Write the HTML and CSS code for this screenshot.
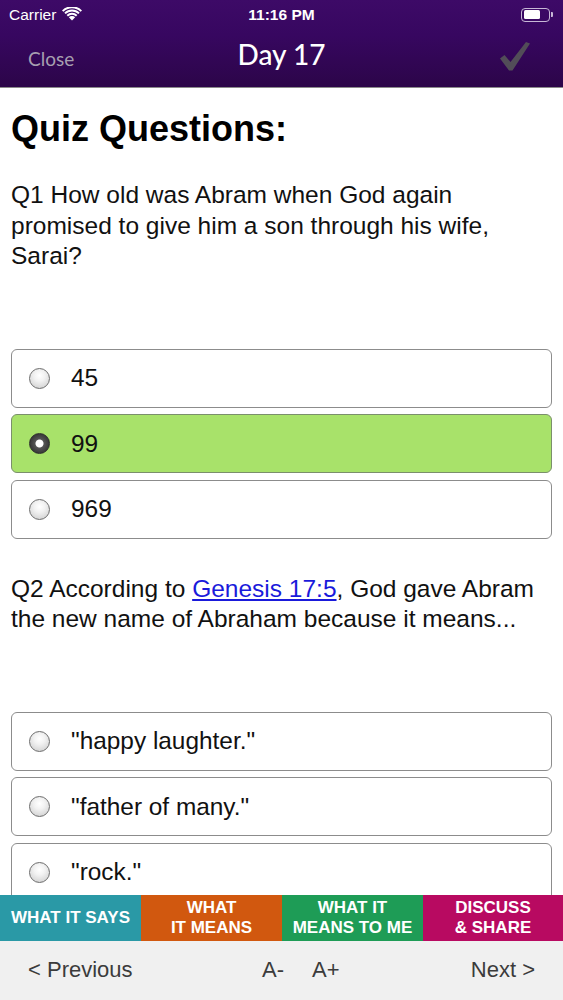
FILE: index.html
```html
<!DOCTYPE html>
<html>
<head>
<meta charset="utf-8">
<link rel="stylesheet" href="styles.css">
</head>
<body>
<div class="app">
  <header class="header">
    <div class="status">
      <div class="status-left">
        <span class="carrier">Carrier</span>
        <svg class="wifi" width="20" height="14" viewBox="0 0 20 14">
          <path d="M10 13.5 L6.8 10.2 A4.6 4.6 0 0 1 13.2 10.2 Z" fill="#fff"/>
          <path d="M4.6 8 A7.8 7.8 0 0 1 15.4 8 L14 9.4 A5.8 5.8 0 0 0 6 9.4 Z" fill="#fff"/>
          <path d="M2.3 5.7 A11 11 0 0 1 17.7 5.7 L16.3 7.1 A9 9 0 0 0 3.7 7.1 Z" fill="#fff"/>
          <path d="M0 3.4 A14.2 14.2 0 0 1 20 3.4 L18.6 4.8 A12.2 12.2 0 0 0 1.4 4.8 Z" fill="#fff"/>
        </svg>
      </div>
      <span class="time">11:16 PM</span>
      <div class="battery">
        <div class="battery-body"><div class="battery-fill"></div></div>
        <div class="battery-tip"></div>
      </div>
    </div>
    <div class="nav">
      <span class="nav-close">Close</span>
      <span class="nav-title">Day 17</span>
      <svg class="nav-check" width="30" height="30" viewBox="0 0 30 30">
        <path d="M0 17.5 L4.5 14 L10.5 21 L26 1 L30 2.5 L12.5 29.5 L9 29.5 Z" fill="#524d58"/>
      </svg>
    </div>
  </header>

  <main class="content">
    <h1 class="title">Quiz Questions:</h1>

    <section class="question">
      <p class="q-text">Q1 How old was Abram when God again promised to give him a son through his wife, Sarai?</p>
      <div class="options">
        <div class="option"><span class="radio"></span><span class="opt-label">45</span></div>
        <div class="option option-selected"><span class="radio radio-on"></span><span class="opt-label">99</span></div>
        <div class="option"><span class="radio"></span><span class="opt-label">969</span></div>
      </div>
    </section>

    <section class="question">
      <p class="q-text">Q2 According to <a class="ref" href="#">Genesis 17:5</a>, God gave Abram the new name of Abraham because it means...</p>
      <div class="options">
        <div class="option"><span class="radio"></span><span class="opt-label">"happy laughter."</span></div>
        <div class="option"><span class="radio"></span><span class="opt-label">"father of many."</span></div>
        <div class="option"><span class="radio"></span><span class="opt-label">"rock."</span></div>
      </div>
    </section>
  </main>

  <nav class="tabs">
    <div class="tab tab-says">WHAT IT SAYS</div>
    <div class="tab tab-means">WHAT<br>IT MEANS</div>
    <div class="tab tab-me">WHAT IT<br>MEANS TO ME</div>
    <div class="tab tab-share">DISCUSS<br>&amp; SHARE</div>
  </nav>

  <footer class="toolbar">
    <span class="tb-prev">&lt; Previous</span>
    <div class="tb-size">
      <span>A-</span>
      <span>A+</span>
    </div>
    <span class="tb-next">Next &gt;</span>
  </footer>
</div>
</body>
</html>
```

FILE: styles.css
```css
* { box-sizing: border-box; }
html, body { margin: 0; padding: 0; }
body {
  font-family: "Liberation Sans", Arial, sans-serif;
  background: #fff;
  color: #111;
}
.app {
  width: 563px;
  height: 1000px;
  display: flex;
  flex-direction: column;
  overflow: hidden;
}

/* header */
.header {
  height: 88px;
  flex: none;
  background: linear-gradient(#3d0a67 0%, #370760 40%, #2c0549 100%);
  border-bottom: 1px solid #8a8a8a;
  color: #fff;
}
.status {
  height: 29px;
  display: flex;
  align-items: center;
  justify-content: space-between;
  padding: 0 10px 0 9px;
  position: relative;
}
.status-left { display: flex; align-items: center; gap: 6px; width: 120px; }
.carrier { font-size: 15.5px; }
.wifi { margin-top: -1px; }
.time {
  font-size: 15.5px;
  font-weight: 600;
  position: absolute;
  left: 0; right: 0;
  text-align: center;
}
.battery { display: flex; align-items: center; gap: 1px; }
.battery-body {
  width: 29px; height: 14px;
  border: 1.5px solid #c7b8d6;
  border-radius: 4px;
  padding: 1.5px;
}
.battery-fill { width: 70%; height: 100%; background: #fff; border-radius: 1.5px; }
.battery-tip { width: 2px; height: 5px; background: #c7b8d6; border-radius: 0 1px 1px 0; }

.nav {
  height: 58px;
  display: flex;
  align-items: center;
  justify-content: space-between;
  padding: 0 33px 4px 28px;
  position: relative;
}
.nav-close {
  font-family: "Lato", "Liberation Sans", sans-serif;
  font-size: 19px;
  color: #a79fb0;
  margin-top: 4px;
}
.nav-title {
  font-family: "Lato", "Liberation Sans", sans-serif;
  font-size: 28px;
  font-weight: 500;
  position: absolute;
  left: 0; right: 0;
  text-align: center;
  top: 8px;
}
.nav-check { margin-top: 0; }

/* content */
.content {
  flex: 1;
  overflow: hidden;
  padding: 0 11px;
}
.title {
  font-size: 36px;
  font-weight: bold;
  line-height: 42px;
  margin: 20px 0 0;
  color: #000;
}
.question { margin-top: 30px; }
.question + .question { margin-top: 35px; }
.q-text {
  margin: 0;
  font-size: 24.5px;
  line-height: 30.5px;
  color: #111;
}
.ref { color: #1a1adb; text-decoration: underline; }
.options {
  margin-top: 77px;
  display: flex;
  flex-direction: column;
  gap: 6.5px;
}
.option {
  height: 59px;
  border: 1.5px solid #8c8c8c;
  border-radius: 6px;
  background: #fff;
  display: flex;
  align-items: center;
  padding-left: 17px;
  gap: 21px;
}
.option-selected {
  background: #a8e26a;
  border-color: #7b8f6c;
}
.opt-label { font-size: 24.4px; color: #111; }
.radio {
  width: 21px; height: 21px;
  border-radius: 50%;
  flex: none;
  border: 1.5px solid #6d6d6d;
  background: radial-gradient(circle at 50% 35%, #ffffff 0%, #f2f2f2 35%, #c9c9c9 100%);
}
.radio-on {
  border-color: #2d2d2d;
  background: radial-gradient(circle, #ffffff 0 3.5px, #555 4.5px, #3a3a3a 70%, #222 100%);
}

/* tabs */
.tabs {
  height: 46px;
  flex: none;
  display: grid;
  grid-template-columns: 141px 141px 141px 140px;
}
.tab {
  display: flex;
  align-items: center;
  justify-content: center;
  text-align: center;
  color: #fff;
  font-weight: bold;
  font-size: 17px;
  line-height: 20px;
}
.tab-says { background: #2a99a6; }
.tab-means { background: #d1580f; }
.tab-me { background: #1e9c56; }
.tab-share { background: #b80a61; }

/* toolbar */
.toolbar {
  height: 59px;
  flex: none;
  background: #f0f0f0;
  display: flex;
  align-items: center;
  padding: 0 28px 2px 28px;
  font-size: 22px;
  color: #3b3b3b;
  position: relative;
}
.tb-prev { width: 200px; }
.tb-size {
  display: flex;
  gap: 28px;
  margin-left: 34px;
}
.tb-next { margin-left: auto; }
```
